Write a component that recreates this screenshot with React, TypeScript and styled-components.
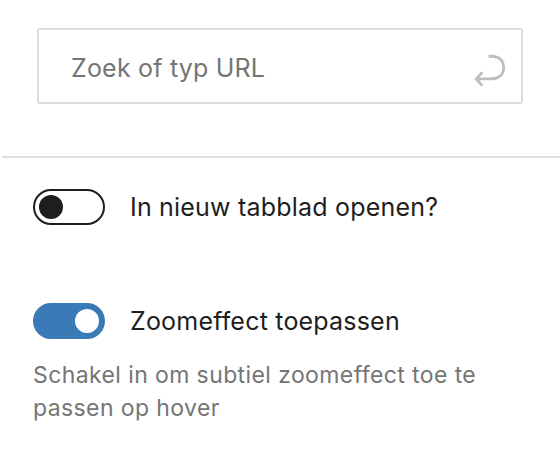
import React from 'react';
import styled, {createGlobalStyle} from "styled-components";

const GlobalStyle = createGlobalStyle`
  html, body {
    margin: 0;
    padding: 0;
    background: #fff;
  }
  body {
    font-family: Inter, "Liberation Sans", sans-serif;
    -webkit-font-smoothing: antialiased;
  }
`

const EnterIcon = () => (
    <svg width="44" height="44" viewBox="0 0 24 24" fill="#bdbdbd">
        <path d="M6.734 16.106l2.176-2.38-1.093-1.028-3.846 4.158 3.846 4.157 1.093-1.027-2.176-2.38h2.811c1.125 0 2.25.03 3.374 0 1.428-.001 3.362-.25 4.963-1.277 1.66-1.065 2.868-2.906 2.868-5.859 0-2.479-1.327-4.896-3.65-5.930-1.82-.813-3.044-.8-4.806-.788l-.567.002v1.5c.184 0 .368 0 .553-.002 1.820-.007 2.704-.014 4.21.657 1.854.827 2.76 2.657 2.76 4.561 0 2.472-.973 3.824-2.178 4.596-1.258.807-2.864 1.04-4.163 1.04h-.02c-1.115.03-2.229 0-3.344 0H6.734z"/>
    </svg>
)

type ToggleProps = { checked?: boolean }

const Toggle = ({checked}: ToggleProps) => (
    <Track $checked={checked}>
        <Knob $checked={checked}/>
    </Track>
)

export default function App() {
    return (
        <>
            <GlobalStyle/>
            <Panel>
                <SearchSection>
                    <UrlField>
                        <Placeholder>Zoek of typ URL</Placeholder>
                        <IconSlot><EnterIcon/></IconSlot>
                    </UrlField>
                </SearchSection>
                <Divider/>
                <Settings>
                    <ToggleRow>
                        <Toggle/>
                        <Label>In nieuw tabblad openen?</Label>
                    </ToggleRow>
                    <Field>
                        <ToggleRow>
                            <Toggle checked/>
                            <Label>Zoomeffect toepassen</Label>
                        </ToggleRow>
                        <Help>Schakel in om subtiel zoomeffect toe te passen op hover</Help>
                    </Field>
                </Settings>
            </Panel>
        </>
    );
}

const Panel = styled.div`
  width: 560px;
  height: 450px;
  background: #fff;
  overflow: hidden;
`
const SearchSection = styled.div`
  padding: 28px 37px 52px 37px;
`
const UrlField = styled.div`
  box-sizing: border-box;
  height: 76px;
  border: 2px solid #dddddd;
  border-radius: 3px;
  display: flex;
  align-items: center;
  justify-content: space-between;
  padding: 0 10px 0 32px;
`
const Placeholder = styled.span`
  font-size: 25px;
  letter-spacing: 0.2px;
  color: #757575;
  margin-top: 4px;
`
const IconSlot = styled.span`
  display: flex;
  margin-top: 8px;
`
const Divider = styled.div`
  height: 2px;
  background: #e0e0e0;
  margin-left: 2px;
`
const Settings = styled.div`
  padding: 31px 33px 0 33px;
  display: flex;
  flex-direction: column;
  gap: 78px;
`
const Field = styled.div`
  display: flex;
  flex-direction: column;
`
const ToggleRow = styled.div`
  display: flex;
  align-items: center;
  gap: 25px;
`
const Track = styled.span<{ $checked?: boolean }>`
  box-sizing: border-box;
  position: relative;
  flex: none;
  width: 72px;
  height: 36px;
  border-radius: 18px;
  border: 2px solid ${p => p.$checked ? '#3a7ab7' : '#1e1e1e'};
  background: ${p => p.$checked ? '#3a7ab7' : '#fff'};
  display: flex;
  align-items: center;
  justify-content: ${p => p.$checked ? 'flex-end' : 'flex-start'};
  padding: 0 4px;
`
const Knob = styled.span<{ $checked?: boolean }>`
  width: 24px;
  height: 24px;
  border-radius: 50%;
  background: ${p => p.$checked ? '#fff' : '#1e1e1e'};
`
const Label = styled.span`
  font-size: 25px;
  letter-spacing: 0.2px;
  color: #1e1e1e;
`
const Help = styled.p`
  margin: 20px 0 0 0;
  font-size: 23px;
  letter-spacing: 0.4px;
  line-height: 33px;
  color: #757575;
  max-width: 470px;
`
